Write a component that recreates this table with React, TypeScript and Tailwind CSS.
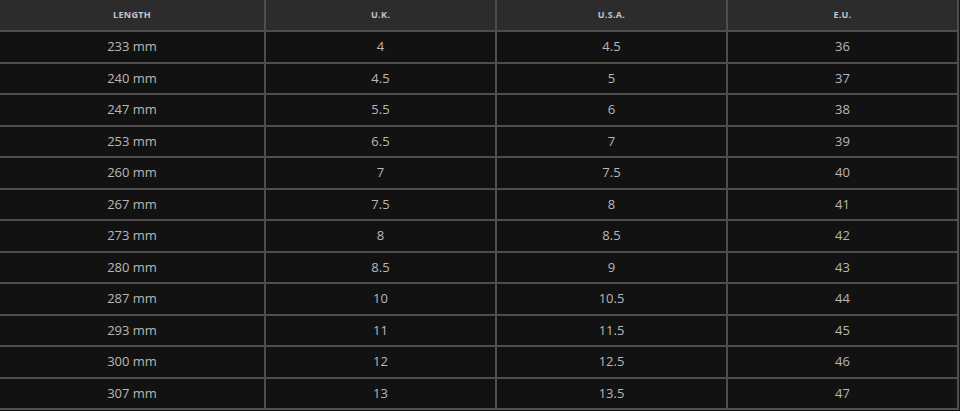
const rows = [
  ["233 mm", "4", "4.5", "36"],
  ["240 mm", "4.5", "5", "37"],
  ["247 mm", "5.5", "6", "38"],
  ["253 mm", "6.5", "7", "39"],
  ["260 mm", "7", "7.5", "40"],
  ["267 mm", "7.5", "8", "41"],
  ["273 mm", "8", "8.5", "42"],
  ["280 mm", "8.5", "9", "43"],
  ["287 mm", "10", "10.5", "44"],
  ["293 mm", "11", "11.5", "45"],
  ["300 mm", "12", "12.5", "46"],
  ["307 mm", "13", "13.5", "47"],
];

const headers = ["Length", "U.K.", "U.S.A.", "E.U."];

export default function App() {
  return (
    <div className="w-[960px] h-[411px] bg-[#151515] overflow-hidden" style={{ fontFamily: '"Open Sans", "Liberation Sans", sans-serif' }}>
      <div className="w-[959px] bg-[#4e4e4e] grid grid-cols-[264px_229px_229px_229px] gap-x-[2px] gap-y-[2px] pr-[2px] pb-[2px]">
        {headers.map((h) => (
          <div key={h} className="h-[30px] bg-[#2c2c2c] flex items-center justify-center text-[9px] font-bold uppercase tracking-[0.3px] text-[#c4c4cc]">
            {h}
          </div>
        ))}
        {rows.map((r, i) =>
          r.map((c, j) => (
            <div key={`${i}-${j}`} className="h-[29.5px] bg-[#121212] flex items-center justify-center text-[13px] text-[#b8b8b8]">
              {c}
            </div>
          ))
        )}
      </div>
    </div>
  );
}
